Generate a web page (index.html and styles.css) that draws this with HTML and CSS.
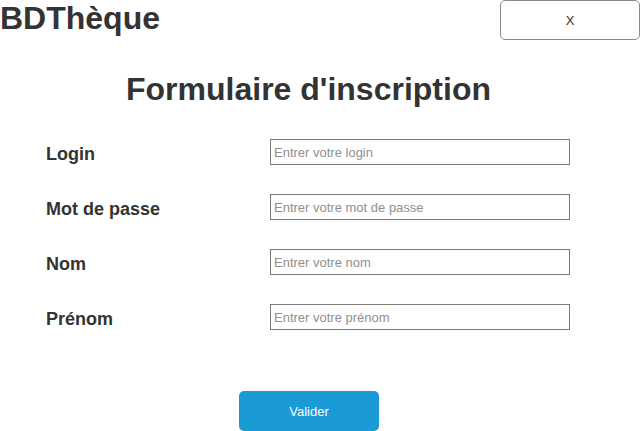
FILE: index.html
```html
<!DOCTYPE html>
<html lang="fr">
<head>
<meta charset="utf-8">
<title>BDThèque - Inscription</title>
<link rel="stylesheet" href="styles.css">
</head>
<body>
<header class="top">
  <div class="brand">BDThèque</div>
  <button class="close" type="button">X</button>
</header>
<main class="main">
  <h1 class="title">Formulaire d'inscription</h1>
  <form class="form">
    <div class="row">
      <label class="label" for="login">Login</label>
      <input class="field" id="login" type="text" placeholder="Entrer votre login">
    </div>
    <div class="row">
      <label class="label" for="mdp">Mot de passe</label>
      <input class="field" id="mdp" type="password" placeholder="Entrer votre mot de passe">
    </div>
    <div class="row">
      <label class="label" for="nom">Nom</label>
      <input class="field" id="nom" type="text" placeholder="Entrer votre nom">
    </div>
    <div class="row">
      <label class="label" for="prenom">Prénom</label>
      <input class="field" id="prenom" type="text" placeholder="Entrer votre prénom">
    </div>
    <div class="actions">
      <button class="submit" type="button">Valider</button>
    </div>
  </form>
</main>
</body>
</html>
```

FILE: styles.css
```css
* { box-sizing: border-box; }
html, body { margin: 0; padding: 0; background: #fff; }
body {
  font-family: "Liberation Sans", Arial, sans-serif;
  color: #333;
  width: 640px;
  height: 431px;
  overflow: hidden;
}
.top {
  display: flex;
  justify-content: space-between;
  align-items: flex-start;
  height: 40px;
}
.brand {
  font-size: 32px;
  font-weight: bold;
  line-height: 37px;
  color: #333;
}
.close {
  width: 140px;
  height: 40px;
  background: #fff;
  border: 1px solid #8a8a8a;
  border-radius: 5px;
  font-family: "Liberation Sans", Arial, sans-serif;
  font-size: 13px;
  color: #333;
  padding: 0;
}
.main {
  width: 617px;
}
.title {
  margin: 31px 0 0;
  font-size: 32px;
  line-height: 37px;
  font-weight: bold;
  text-align: center;
  color: #333;
}
.form {
  margin-top: 31px;
  padding-left: 46px;
  display: flex;
  flex-direction: column;
  gap: 24px;
}
.row {
  display: grid;
  grid-template-columns: 224px 300px;
  align-items: start;
}
.label {
  font-size: 18px;
  font-weight: bold;
  line-height: 31px;
  color: #333;
}
.field {
  width: 300px;
  height: 26px;
  border: 1px solid #7a7a7a;
  border-radius: 0;
  padding: 0 3px;
  font-family: "Liberation Sans", Arial, sans-serif;
  font-size: 13px;
  color: #333;
  outline: none;
}
.field::placeholder { color: #8f8f8f; }
.actions {
  margin-top: 32px;
  margin-left: -46px;
  display: flex;
  justify-content: center;
  padding-left: 1px;
}
.submit {
  width: 140px;
  height: 40px;
  background: #1a9bd6;
  border: none;
  border-radius: 5px;
  color: #fff;
  font-family: "Liberation Sans", Arial, sans-serif;
  font-size: 13px;
  padding: 0;
}
```
